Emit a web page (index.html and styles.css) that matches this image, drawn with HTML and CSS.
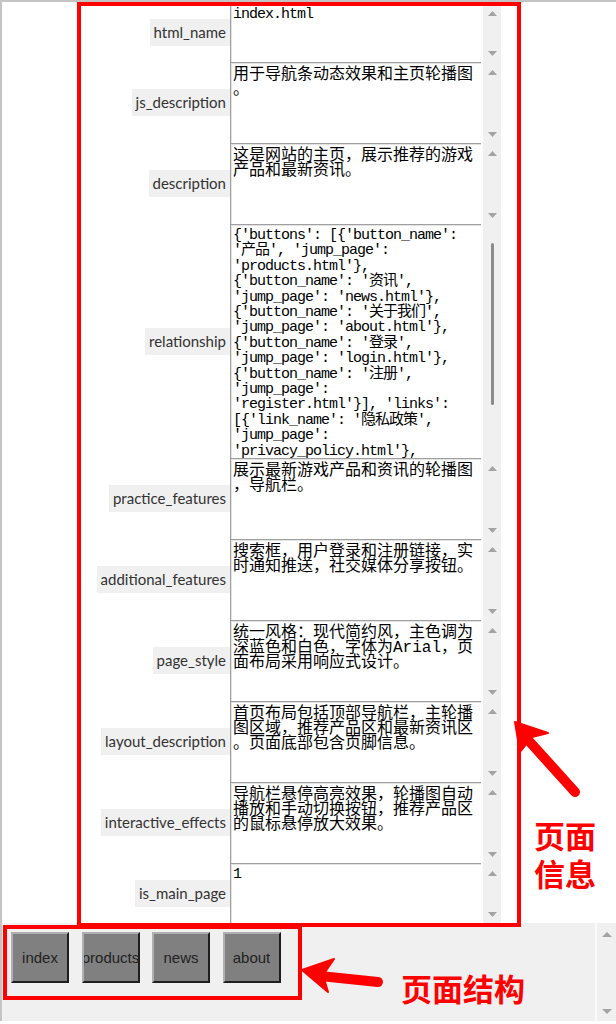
FILE: index.html
```html
<!DOCTYPE html>
<html lang="zh-CN">
<head>
<meta charset="utf-8">
<title>页面信息</title>
<link rel="stylesheet" href="styles.css">
</head>
<body>
<div class="window">
  <div class="form">
    <div class="row short">
      <label class="lbl" for="f1">html_name</label>
      <textarea id="f1" class="field mono">index.html</textarea>
      <div class="sb"><svg class="tri" viewBox="0 0 9 5"><path d="M4.5 0L9 5H0z"/></svg><svg class="tri" viewBox="0 0 9 5"><path d="M0 0H9L4.5 5z"/></svg></div>
    </div>
    <div class="row">
      <label class="lbl" for="f2">js_description</label>
      <textarea id="f2" class="field cjk">用于导航条动态效果和主页轮播图。</textarea>
      <div class="sb"><svg class="tri" viewBox="0 0 9 5"><path d="M4.5 0L9 5H0z"/></svg><svg class="tri" viewBox="0 0 9 5"><path d="M0 0H9L4.5 5z"/></svg></div>
    </div>
    <div class="row">
      <label class="lbl" for="f3">description</label>
      <textarea id="f3" class="field cjk">这是网站的主页，展示推荐的游戏产品和最新资讯。</textarea>
      <div class="sb"><svg class="tri" viewBox="0 0 9 5"><path d="M4.5 0L9 5H0z"/></svg><svg class="tri" viewBox="0 0 9 5"><path d="M0 0H9L4.5 5z"/></svg></div>
    </div>
    <div class="row tall">
      <label class="lbl" for="f4">relationship</label>
      <textarea id="f4" class="field mono">{'buttons': [{'button_name': '产品', 'jump_page': 'products.html'}, {'button_name': '资讯', 'jump_page': 'news.html'}, {'button_name': '关于我们', 'jump_page': 'about.html'}, {'button_name': '登录', 'jump_page': 'login.html'}, {'button_name': '注册', 'jump_page': 'register.html'}], 'links': [{'link_name': '隐私政策', 'jump_page': 'privacy_policy.html'},</textarea>
      <div class="sb sb-active"><div class="thumb"></div></div>
    </div>
    <div class="row">
      <label class="lbl" for="f5">practice_features</label>
      <textarea id="f5" class="field cjk">展示最新游戏产品和资讯的轮播图，导航栏。</textarea>
      <div class="sb"><svg class="tri" viewBox="0 0 9 5"><path d="M4.5 0L9 5H0z"/></svg><svg class="tri" viewBox="0 0 9 5"><path d="M0 0H9L4.5 5z"/></svg></div>
    </div>
    <div class="row">
      <label class="lbl" for="f6">additional_features</label>
      <textarea id="f6" class="field cjk">搜索框，用户登录和注册链接，实时通知推送，社交媒体分享按钮。</textarea>
      <div class="sb"><svg class="tri" viewBox="0 0 9 5"><path d="M4.5 0L9 5H0z"/></svg><svg class="tri" viewBox="0 0 9 5"><path d="M0 0H9L4.5 5z"/></svg></div>
    </div>
    <div class="row">
      <label class="lbl" for="f7">page_style</label>
      <textarea id="f7" class="field cjk">统一风格：现代简约风，主色调为深蓝色和白色，字体为Arial，页面布局采用响应式设计。</textarea>
      <div class="sb"><svg class="tri" viewBox="0 0 9 5"><path d="M4.5 0L9 5H0z"/></svg><svg class="tri" viewBox="0 0 9 5"><path d="M0 0H9L4.5 5z"/></svg></div>
    </div>
    <div class="row">
      <label class="lbl" for="f8">layout_description</label>
      <textarea id="f8" class="field cjk">首页布局包括顶部导航栏，主轮播图区域，推荐产品区和最新资讯区。页面底部包含页脚信息。</textarea>
      <div class="sb"><svg class="tri" viewBox="0 0 9 5"><path d="M4.5 0L9 5H0z"/></svg><svg class="tri" viewBox="0 0 9 5"><path d="M0 0H9L4.5 5z"/></svg></div>
    </div>
    <div class="row">
      <label class="lbl" for="f9">interactive_effects</label>
      <textarea id="f9" class="field cjk">导航栏悬停高亮效果，轮播图自动播放和手动切换按钮，推荐产品区的鼠标悬停放大效果。</textarea>
      <div class="sb"><svg class="tri" viewBox="0 0 9 5"><path d="M4.5 0L9 5H0z"/></svg><svg class="tri" viewBox="0 0 9 5"><path d="M0 0H9L4.5 5z"/></svg></div>
    </div>
    <div class="row last">
      <label class="lbl" for="f10">is_main_page</label>
      <textarea id="f10" class="field mono">1</textarea>
      <div class="sb"><svg class="tri" viewBox="0 0 9 5"><path d="M4.5 0L9 5H0z"/></svg><svg class="tri" viewBox="0 0 9 5"><path d="M0 0H9L4.5 5z"/></svg></div>
    </div>
  </div>
  <div class="bar">
    <div class="btns">
      <button class="btn">index</button>
      <button class="btn">products</button>
      <button class="btn">news</button>
      <button class="btn">about</button>
    </div>
    <div class="vsb"><svg class="tri2" viewBox="0 0 10 5"><path d="M5 0L10 5H0z"/></svg><svg class="tri2" viewBox="0 0 10 5"><path d="M0 0H10L5 5z"/></svg></div>
  </div>
</div>

<div class="mark mark-info"></div>
<div class="mark mark-struct"></div>
<svg class="arrows" viewBox="0 0 616 1024">
  <path class="head" d="M302 970L334 959L323 975L328 992Z"/>
  <line class="shaft" x1="320" y1="976" x2="378" y2="982"/>
  <path class="head" d="M515 722L548 733L532 737L520 752Z"/>
  <line class="shaft" x1="529" y1="741" x2="575" y2="792"/>
</svg>
<div class="note note-info">页面<br>信息</div>
<div class="note note-struct">页面结构</div>
</body>
</html>
```

FILE: styles.css
```css
html, body {
  margin: 0;
  padding: 0;
  background: #ffffff;
}
body {
  position: relative;
  width: 616px;
  height: 1024px;
  overflow: hidden;
}
.window {
  box-sizing: border-box;
  height: 1021px;
  border-top: 2px solid #c4c4c4;
  border-left: 2px solid #c4c4c4;
  display: flex;
  flex-direction: column;
}
.form {
  box-sizing: border-box;
  height: 921px;
  padding-top: 1px;
  display: flex;
  flex-direction: column;
}
.row {
  display: grid;
  grid-template-columns: 228px 251px 20px;
  height: 81px;
}
.row.short { height: 59px; }
.row.last { height: 60px; }
.row.tall { height: 234px; }

.lbl {
  justify-self: end;
  align-self: center;
  background: #f0f0f0;
  padding: 4px 4px;
  font-family: Lato, "Noto Sans", sans-serif;
  font-size: 15px;
  line-height: 19px;
  color: #333333;
}
.field {
  box-sizing: border-box;
  width: 251px;
  height: 100%;
  margin: 0;
  border: 0;
  border-top: 1px solid #a0a0a0;
  border-left: 1px solid #a0a0a0;
  box-shadow: inset 1px 1px 0 #e3e3e3;
  padding: 2px 2px 0 2px;
  background: #ffffff;
  color: #000000;
  resize: none;
  overflow: hidden;
  outline: none;
}
.field.cjk {
  font-family: "Liberation Mono", "Noto Sans CJK SC", monospace;
  font-size: 16px;
  line-height: 15.4px;
  line-break: anywhere;
  padding-top: 4.5px;
}
.field.mono {
  font-family: "Liberation Mono", "Noto Sans CJK SC", monospace;
  font-size: 15px;
  letter-spacing: -1px;
  line-height: 15.4px;
  padding-top: 3px;
}
.sb {
  margin-left: 2px;
  background: #f0f0f0;
  display: flex;
  flex-direction: column;
  justify-content: space-between;
  align-items: center;
  padding: 8px 0 6px;
}
.sb-active {
  justify-content: flex-start;
  padding-top: 19px;
}
.thumb {
  width: 3px;
  height: 162px;
  border-radius: 2px;
  background: #8b8b8b;
}
.tri {
  width: 9px;
  height: 5px;
  fill: #a3a3a3;
}
.bar {
  height: 98px;
  background: #f0f0f0;
  display: flex;
}
.btns {
  display: flex;
  align-items: flex-start;
  gap: 12.5px;
  padding: 9px 0 0 9px;
}
.btn {
  box-sizing: border-box;
  width: 58px;
  height: 51px;
  margin: 0;
  padding: 0;
  background: #808080;
  border: 2px solid;
  border-color: #b0b0b0 #1e1e1e #1e1e1e #b0b0b0;
  font-family: "Liberation Sans", Arial, sans-serif;
  font-size: 15px;
  color: #222222;
  display: flex;
  align-items: center;
  justify-content: center;
  overflow: hidden;
  white-space: nowrap;
}
.vsb {
  margin-left: auto;
  width: 19px;
  border-left: 2px solid #fafafa;
  display: flex;
  flex-direction: column;
  justify-content: space-between;
  align-items: center;
  padding: 9px 0 7px;
}
.tri2 {
  width: 10px;
  height: 5px;
  fill: #a3a3a3;
}

/* annotation overlays */
.mark {
  position: absolute;
  box-sizing: border-box;
  border: 4px solid #ff0000;
}
.mark-info {
  left: 77px;
  top: 2px;
  width: 444px;
  height: 925px;
}
.mark-struct {
  left: 3px;
  top: 925px;
  width: 299px;
  height: 75px;
}
.arrows {
  position: absolute;
  left: 0;
  top: 0;
  width: 616px;
  height: 1024px;
  pointer-events: none;
}
.head {
  fill: #ff0000;
  stroke: #ff0000;
  stroke-width: 2;
  stroke-linejoin: round;
}
.shaft {
  stroke: #ff0000;
  stroke-width: 10;
  stroke-linecap: round;
}
.note {
  position: absolute;
  color: #ff0000;
  font-family: "Liberation Sans", "Noto Sans CJK SC", sans-serif;
  font-weight: 700;
  font-size: 31px;
  line-height: 38px;
  white-space: nowrap;
}
.note-info {
  left: 534px;
  top: 819px;
}
.note-struct {
  left: 401px;
  top: 972px;
}
```
